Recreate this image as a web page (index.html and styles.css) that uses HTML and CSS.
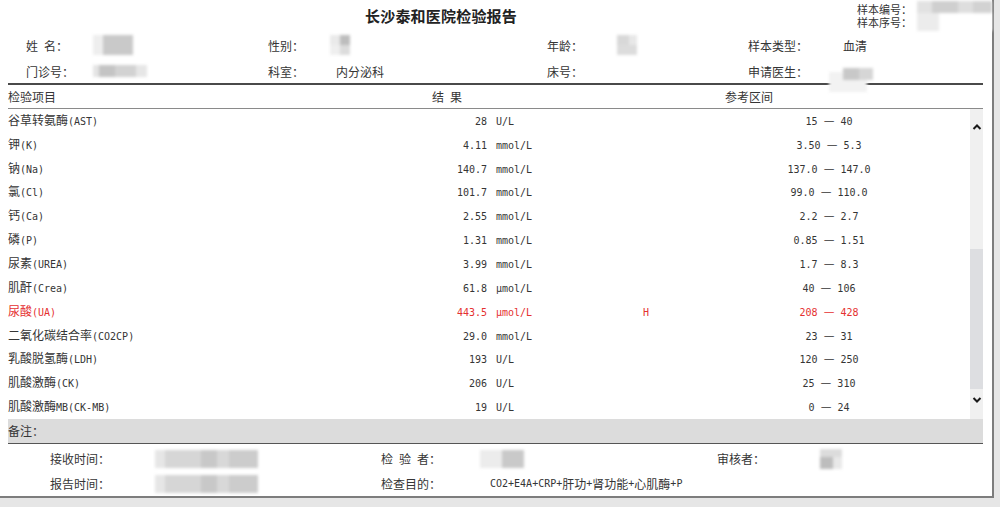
FILE: index.html
```html
<!DOCTYPE html>
<html lang="zh-CN">
<head>
<meta charset="utf-8">
<title>长沙泰和医院检验报告</title>
<link rel="stylesheet" href="styles.css">
</head>
<body>
<div class="sheet">
  <div class="top">
    <div class="title">长沙泰和医院检验报告</div>
    <div class="sample">
      <div class="sample-labels">
        <div>样本编号：</div>
        <div>样本序号：</div>
      </div>
      <div class="blur blur-sample"></div>
    </div>
  </div>

  <div class="info">
    <div class="lbl">姓&ensp;名：</div>
    <div class="val"><span class="blur blur-name"></span></div>
    <div class="lbl">性别：</div>
    <div class="val"><span class="blur blur-sex"></span></div>
    <div class="lbl">年龄：</div>
    <div class="val"><span class="blur blur-age"></span></div>
    <div class="lbl">样本类型：</div>
    <div class="val">血清</div>

    <div class="lbl">门诊号：</div>
    <div class="val"><span class="blur blur-clinic"></span></div>
    <div class="lbl">科室：</div>
    <div class="val">内分泌科</div>
    <div class="lbl">床号：</div>
    <div class="val"></div>
    <div class="lbl">申请医生：</div>
    <div class="val"><span class="blur blur-doctor"></span></div>
  </div>

  <div class="table">
    <div class="thead">
      <div>检验项目</div>
      <div>结&ensp;果</div>
      <div>参考区间</div>
    </div>
    <div class="tbody">
      <div class="rows">
        <div class="row"><div>谷草转氨酶<span class="m">(AST)</span></div><div class="res"><span class="m">28</span></div><div class="unit"><span class="m">U/L</span></div><div class="flag"></div><div class="range"><span class="m">15 </span>—<span class="m"> 40</span></div></div>
        <div class="row"><div>钾<span class="m">(K)</span></div><div class="res"><span class="m">4.11</span></div><div class="unit"><span class="m">mmol/L</span></div><div class="flag"></div><div class="range"><span class="m">3.50 </span>—<span class="m"> 5.3</span></div></div>
        <div class="row"><div>钠<span class="m">(Na)</span></div><div class="res"><span class="m">140.7</span></div><div class="unit"><span class="m">mmol/L</span></div><div class="flag"></div><div class="range"><span class="m">137.0 </span>—<span class="m"> 147.0</span></div></div>
        <div class="row"><div>氯<span class="m">(Cl)</span></div><div class="res"><span class="m">101.7</span></div><div class="unit"><span class="m">mmol/L</span></div><div class="flag"></div><div class="range"><span class="m">99.0 </span>—<span class="m"> 110.0</span></div></div>
        <div class="row"><div>钙<span class="m">(Ca)</span></div><div class="res"><span class="m">2.55</span></div><div class="unit"><span class="m">mmol/L</span></div><div class="flag"></div><div class="range"><span class="m">2.2 </span>—<span class="m"> 2.7</span></div></div>
        <div class="row"><div>磷<span class="m">(P)</span></div><div class="res"><span class="m">1.31</span></div><div class="unit"><span class="m">mmol/L</span></div><div class="flag"></div><div class="range"><span class="m">0.85 </span>—<span class="m"> 1.51</span></div></div>
        <div class="row"><div>尿素<span class="m">(UREA)</span></div><div class="res"><span class="m">3.99</span></div><div class="unit"><span class="m">mmol/L</span></div><div class="flag"></div><div class="range"><span class="m">1.7 </span>—<span class="m"> 8.3</span></div></div>
        <div class="row"><div>肌酐<span class="m">(Crea)</span></div><div class="res"><span class="m">61.8</span></div><div class="unit"><span class="m">μmol/L</span></div><div class="flag"></div><div class="range"><span class="m">40 </span>—<span class="m"> 106</span></div></div>
        <div class="row high"><div>尿酸<span class="m">(UA)</span></div><div class="res"><span class="m">443.5</span></div><div class="unit"><span class="m">μmol/L</span></div><div class="flag"><span class="m">H</span></div><div class="range"><span class="m">208 </span>—<span class="m"> 428</span></div></div>
        <div class="row"><div>二氧化碳结合率<span class="m">(CO2CP)</span></div><div class="res"><span class="m">29.0</span></div><div class="unit"><span class="m">mmol/L</span></div><div class="flag"></div><div class="range"><span class="m">23 </span>—<span class="m"> 31</span></div></div>
        <div class="row"><div>乳酸脱氢酶<span class="m">(LDH)</span></div><div class="res"><span class="m">193</span></div><div class="unit"><span class="m">U/L</span></div><div class="flag"></div><div class="range"><span class="m">120 </span>—<span class="m"> 250</span></div></div>
        <div class="row"><div>肌酸激酶<span class="m">(CK)</span></div><div class="res"><span class="m">206</span></div><div class="unit"><span class="m">U/L</span></div><div class="flag"></div><div class="range"><span class="m">25 </span>—<span class="m"> 310</span></div></div>
        <div class="row"><div>肌酸激酶<span class="m">MB(CK-MB)</span></div><div class="res"><span class="m">19</span></div><div class="unit"><span class="m">U/L</span></div><div class="flag"></div><div class="range"><span class="m">0 </span>—<span class="m"> 24</span></div></div>
      </div>
      <div class="scrollbar">
        <div class="sb-up"><svg width="10" height="8" viewBox="0 0 10 8"><polyline points="1.5,6 5,2.5 8.5,6" fill="none" stroke="#1a1a1a" stroke-width="2"/></svg></div>
        <div class="sb-track"></div>
        <div class="sb-thumb"></div>
        <div class="sb-down"><svg width="10" height="8" viewBox="0 0 10 8"><polyline points="1.5,2 5,5.5 8.5,2" fill="none" stroke="#1a1a1a" stroke-width="2"/></svg></div>
      </div>
    </div>
    <div class="remark">备注：</div>
  </div>

  <div class="footer">
    <div class="lbl">接收时间：</div>
    <div class="val"><span class="blur blur-time"></span></div>
    <div class="lbl">检&ensp;验&ensp;者：</div>
    <div class="val"><span class="blur blur-tester"></span></div>
    <div class="lbl">审核者：</div>
    <div class="val"><span class="blur blur-audit"></span></div>

    <div class="lbl">报告时间：</div>
    <div class="val"><span class="blur blur-time"></span></div>
    <div class="lbl">检查目的：</div>
    <div class="val"><span class="m">CO2+E4A+CRP+</span>肝功<span class="m">+</span>肾功能<span class="m">+</span>心肌酶<span class="m">+P</span></div>
    <div class="lbl"></div>
    <div class="val"></div>
  </div>
</div>
</body>
</html>
```

FILE: styles.css
```css
html, body {
  margin: 0;
  padding: 0;
  background: #e6e6e6;
}
body {
  font-family: "Noto Sans CJK SC", "Noto Sans", sans-serif;
  font-size: 12px;
  color: #353535;
  width: 1000px;
  height: 507px;
  overflow: hidden;
}
.m {
  font-family: "DejaVu Sans Mono", "Liberation Mono", monospace;
  font-size: 10px;
}
.sheet {
  box-sizing: border-box;
  width: 994px;
  height: 498px;
  background: #fff;
  border-right: 2px solid #7d7d7d;
  border-bottom: 2px solid #7d7d7d;
  display: flex;
  flex-direction: column;
}

/* top title row */
.top {
  height: 33px;
  display: flex;
  align-items: flex-start;
}
.title {
  margin-left: 365px;
  margin-top: 6px;
  font-size: 15px;
  font-weight: 700;
  line-height: 20px;
  color: #222;
  letter-spacing: 0.2px;
}
.sample {
  margin-left: auto;
  display: flex;
  align-items: flex-start;
}
.sample-labels {
  padding-top: 3px;
  font-size: 11px;
  line-height: 13px;
  white-space: nowrap;
  width: 57px;
}
.blur {
  display: inline-block;
  filter: blur(1.6px);
  vertical-align: middle;
}
.blur-sample {
  width: 75px;
  height: 30px;
  margin-left: 3px;
  margin-top: 1px;
  background:
    linear-gradient(90deg, #e2e2e2 0 20%, #cfcfcf 20% 55%, #dedede 55% 75%, #d2d2d2 75%) top / 100% 12px no-repeat,
    linear-gradient(90deg, #ececec 0 30%, #fff 30%) bottom / 100% 18px no-repeat;
}

/* info grid */
.info {
  display: grid;
  grid-template-columns: 69px 173px 68px 211px 70px 131px 95px 1fr;
  grid-auto-rows: 26px;
  padding-left: 26px;
}
.info .lbl, .info .val {
  white-space: nowrap;
  display: flex;
  align-items: center;
}
.blur-name {
  width: 40px;
  height: 20px;
  margin-left: -2px;
  background: linear-gradient(90deg, #eeeeee 0 25%, #c9c9c9 25% 100%);
}
.blur-sex {
  width: 20px;
  height: 20px;
  margin-left: -6px;
  background:
    linear-gradient(90deg, #eaeaea 0 50%, #bdbdbd 50%) top / 100% 50% no-repeat,
    linear-gradient(90deg, #efefef 0 50%, #dcdcdc 50%) bottom / 100% 50% no-repeat;
}
.blur-age {
  width: 20px;
  height: 20px;
  background:
    linear-gradient(90deg, #d8d8d8 0 60%, #e8e8e8 60%) top / 100% 50% no-repeat,
    linear-gradient(#dcdcdc, #dcdcdc) bottom / 100% 50% no-repeat;
}
.blur-clinic {
  width: 54px;
  height: 12px;
  margin-left: -2px;
  background: linear-gradient(90deg, #e4e4e4 0 12%, #c4c4c4 12% 40%, #d2d2d2 40% 80%, #e6e6e6 80%);
}
.blur-doctor {
  width: 30px;
  height: 12px;
  margin-top: 6px;
  background: linear-gradient(90deg, #c8c8c8 0 55%, #d6d6d6 55%);
  box-shadow: -10px 8px 0 4px #f2f2f2;
}

/* table */
.table {
  margin-left: 8px;
  margin-right: 9px;
  display: flex;
  flex-direction: column;
}
.thead {
  box-sizing: border-box;
  display: grid;
  grid-template-columns: 424px 293px 1fr;
  height: 26px;
  align-items: center;
  border-top: 2px solid #4a4a4a;
  border-bottom: 1px solid #8a8a8a;
  margin-top: -1px;
}
.tbody {
  display: flex;
  height: 310px;
}
.rows {
  flex: 1;
  display: flex;
  flex-direction: column;
}
.row {
  height: 23.85px;
  display: grid;
  grid-template-columns: 380px 99px 156px 100px 172px 1fr;
  align-items: center;
  white-space: nowrap;
  line-height: 16px;
}
.row .res { text-align: right; }
.row .unit { padding-left: 9px; }
.row .range { text-align: center; }
.row .flag { color: #e53030; }
.row.high { color: #e53030; }

.scrollbar {
  width: 13px;
  display: flex;
  flex-direction: column;
  background: #f0f0f0;
}
.sb-up {
  height: 36px;
  display: flex;
  align-items: center;
  justify-content: center;
}
.sb-track { height: 104px; }
.sb-thumb {
  height: 140px;
  background: #dddee1;
}
.sb-down {
  flex: 1;
  display: flex;
  justify-content: center;
  align-items: flex-start;
  padding-top: 7px;
}

.remark {
  height: 24px;
  line-height: 24px;
  background: #dcdcdc;
  border-bottom: 1px solid #555;
}

/* footer */
.footer {
  display: grid;
  grid-template-columns: 105px 226px 109px 227px 103px 1fr;
  grid-auto-rows: 25px;
  padding-left: 50px;
  padding-top: 2px;
}
.footer .lbl, .footer .val {
  display: flex;
  align-items: center;
  white-space: nowrap;
}
.blur-time {
  width: 103px;
  height: 18px;
  background: linear-gradient(90deg, #e6e6e6 0 10%, #d6d6d6 10% 45%, #c8c8c8 45% 60%, #d8d8d8 60% 72%, #cccccc 72% 100%);
}
.blur-tester {
  width: 44px;
  height: 18px;
  margin-left: -10px;
  background: linear-gradient(90deg, #ececec 0 50%, #c9c9c9 50%);
}
.blur-audit {
  width: 22px;
  height: 20px;
  background:
    linear-gradient(#dcdcdc, #dcdcdc) top / 100% 40% no-repeat,
    linear-gradient(90deg, #bdbdbd 0 60%, #e8e8e8 60%) bottom / 100% 60% no-repeat;
}
```
